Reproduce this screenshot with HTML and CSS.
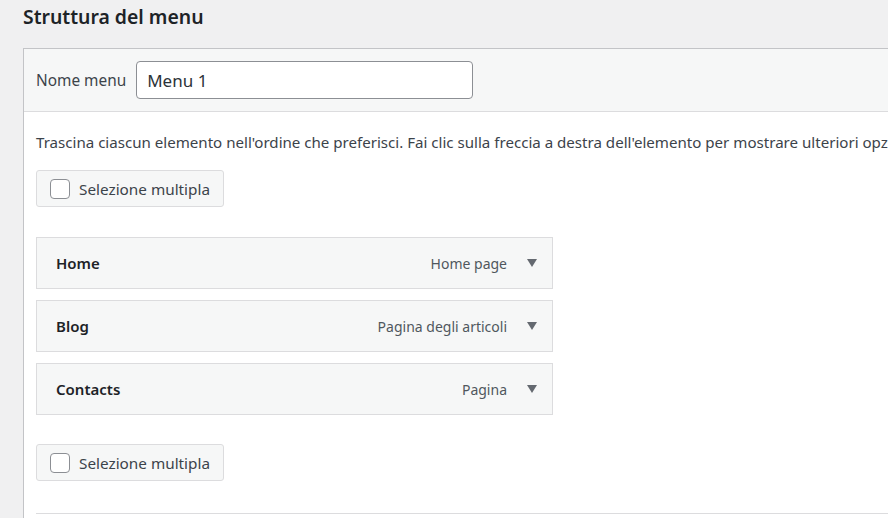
FILE: index.html
```html
<!DOCTYPE html>
<html lang="it">
<head>
<meta charset="utf-8">
<title>Struttura del menu</title>
<link rel="stylesheet" href="styles.css">
</head>
<body>
<div class="wrap">
  <h2 class="title">Struttura del menu</h2>
  <div class="panel">
    <div class="panel-header">
      <label class="name-label" for="menu-name">Nome menu</label>
      <input class="name-input" id="menu-name" type="text" value="Menu 1">
    </div>
    <div class="panel-body">
      <p class="desc">Trascina ciascun elemento nell'ordine che preferisci. Fai clic sulla freccia a destra dell'elemento per mostrare ulteriori opzioni.</p>
      <label class="bulk"><span class="check"></span><span>Selezione multipla</span></label>
      <ul class="items">
        <li class="item"><span class="item-title">Home</span><span class="item-type">Home page</span><span class="arrow"></span></li>
        <li class="item"><span class="item-title">Blog</span><span class="item-type">Pagina degli articoli</span><span class="arrow"></span></li>
        <li class="item"><span class="item-title">Contacts</span><span class="item-type">Pagina</span><span class="arrow"></span></li>
      </ul>
      <label class="bulk"><span class="check"></span><span>Selezione multipla</span></label>
      <div class="footer"></div>
    </div>
  </div>
</div>
</body>
</html>
```
FILE: styles.css
```css
html, body {
  margin: 0;
  padding: 0;
  background: #f0f0f1;
  font-family: "Noto Sans", "Open Sans", sans-serif;
  color: #3c434a;
  overflow: hidden;
  width: 888px;
  height: 518px;
}
.wrap {
  padding-left: 23px;
}
.title {
  margin: 0;
  height: 48px;
  line-height: 34px;
  font-size: 19.4px;
  font-weight: 600;
  color: #1d2327;
  white-space: nowrap;
}
.panel {
  width: 1000px;
  height: 600px;
  border-top: 1px solid #c3c4c7;
  border-left: 1px solid #c3c4c7;
  background: #fff;
}
.panel-header {
  display: flex;
  align-items: center;
  gap: 10px;
  background: #f6f7f7;
  padding: 12px 12px;
  border-bottom: 1px solid #dcdcde;
}
.name-label {
  font-size: 15.4px;
  color: #3c434a;
}
.name-input {
  box-sizing: border-box;
  width: 337px;
  height: 38px;
  margin: 0;
  border: 1px solid #8c8f94;
  border-radius: 4px;
  padding: 0 10px;
  font-family: inherit;
  font-size: 17px;
  color: #2c3338;
  background: #fff;
}
.panel-body {
  padding: 20px 0 0 12px;
}
.desc {
  margin: 0 0 18px;
  font-size: 15.1px;
  line-height: 20px;
  white-space: nowrap;
}
.bulk {
  box-sizing: border-box;
  display: inline-flex;
  align-items: center;
  gap: 9px;
  height: 37px;
  padding: 0 13px 0 13px;
  background: #f6f7f7;
  border: 1px solid #dcdcde;
  border-radius: 3px;
  font-size: 15.3px;
  color: #3c434a;
}
.check {
  box-sizing: border-box;
  width: 20px;
  height: 20px;
  border: 1px solid #8c8f94;
  border-radius: 4px;
  background: #fff;
}
.items {
  list-style: none;
  margin: 30px 0 29px;
  padding: 0;
}
.item {
  box-sizing: border-box;
  display: flex;
  align-items: center;
  width: 517px;
  height: 52px;
  margin-bottom: 11px;
  padding: 0 15px 0 19px;
  background: #f6f7f7;
  border: 1px solid #dcdcde;
}
.item:last-child {
  margin-bottom: 0;
}
.item-title {
  flex: 1;
  font-size: 15px;
  font-weight: 600;
  color: #1d2327;
}
.item-type {
  font-size: 14px;
  color: #50575e;
}
.arrow {
  width: 0;
  height: 0;
  margin-left: 20px;
  border-left: 5px solid transparent;
  border-right: 5px solid transparent;
  border-top: 8px solid #646970;
}
.footer {
  margin-top: 32px;
  border-top: 1px solid #dcdcde;
}
```
